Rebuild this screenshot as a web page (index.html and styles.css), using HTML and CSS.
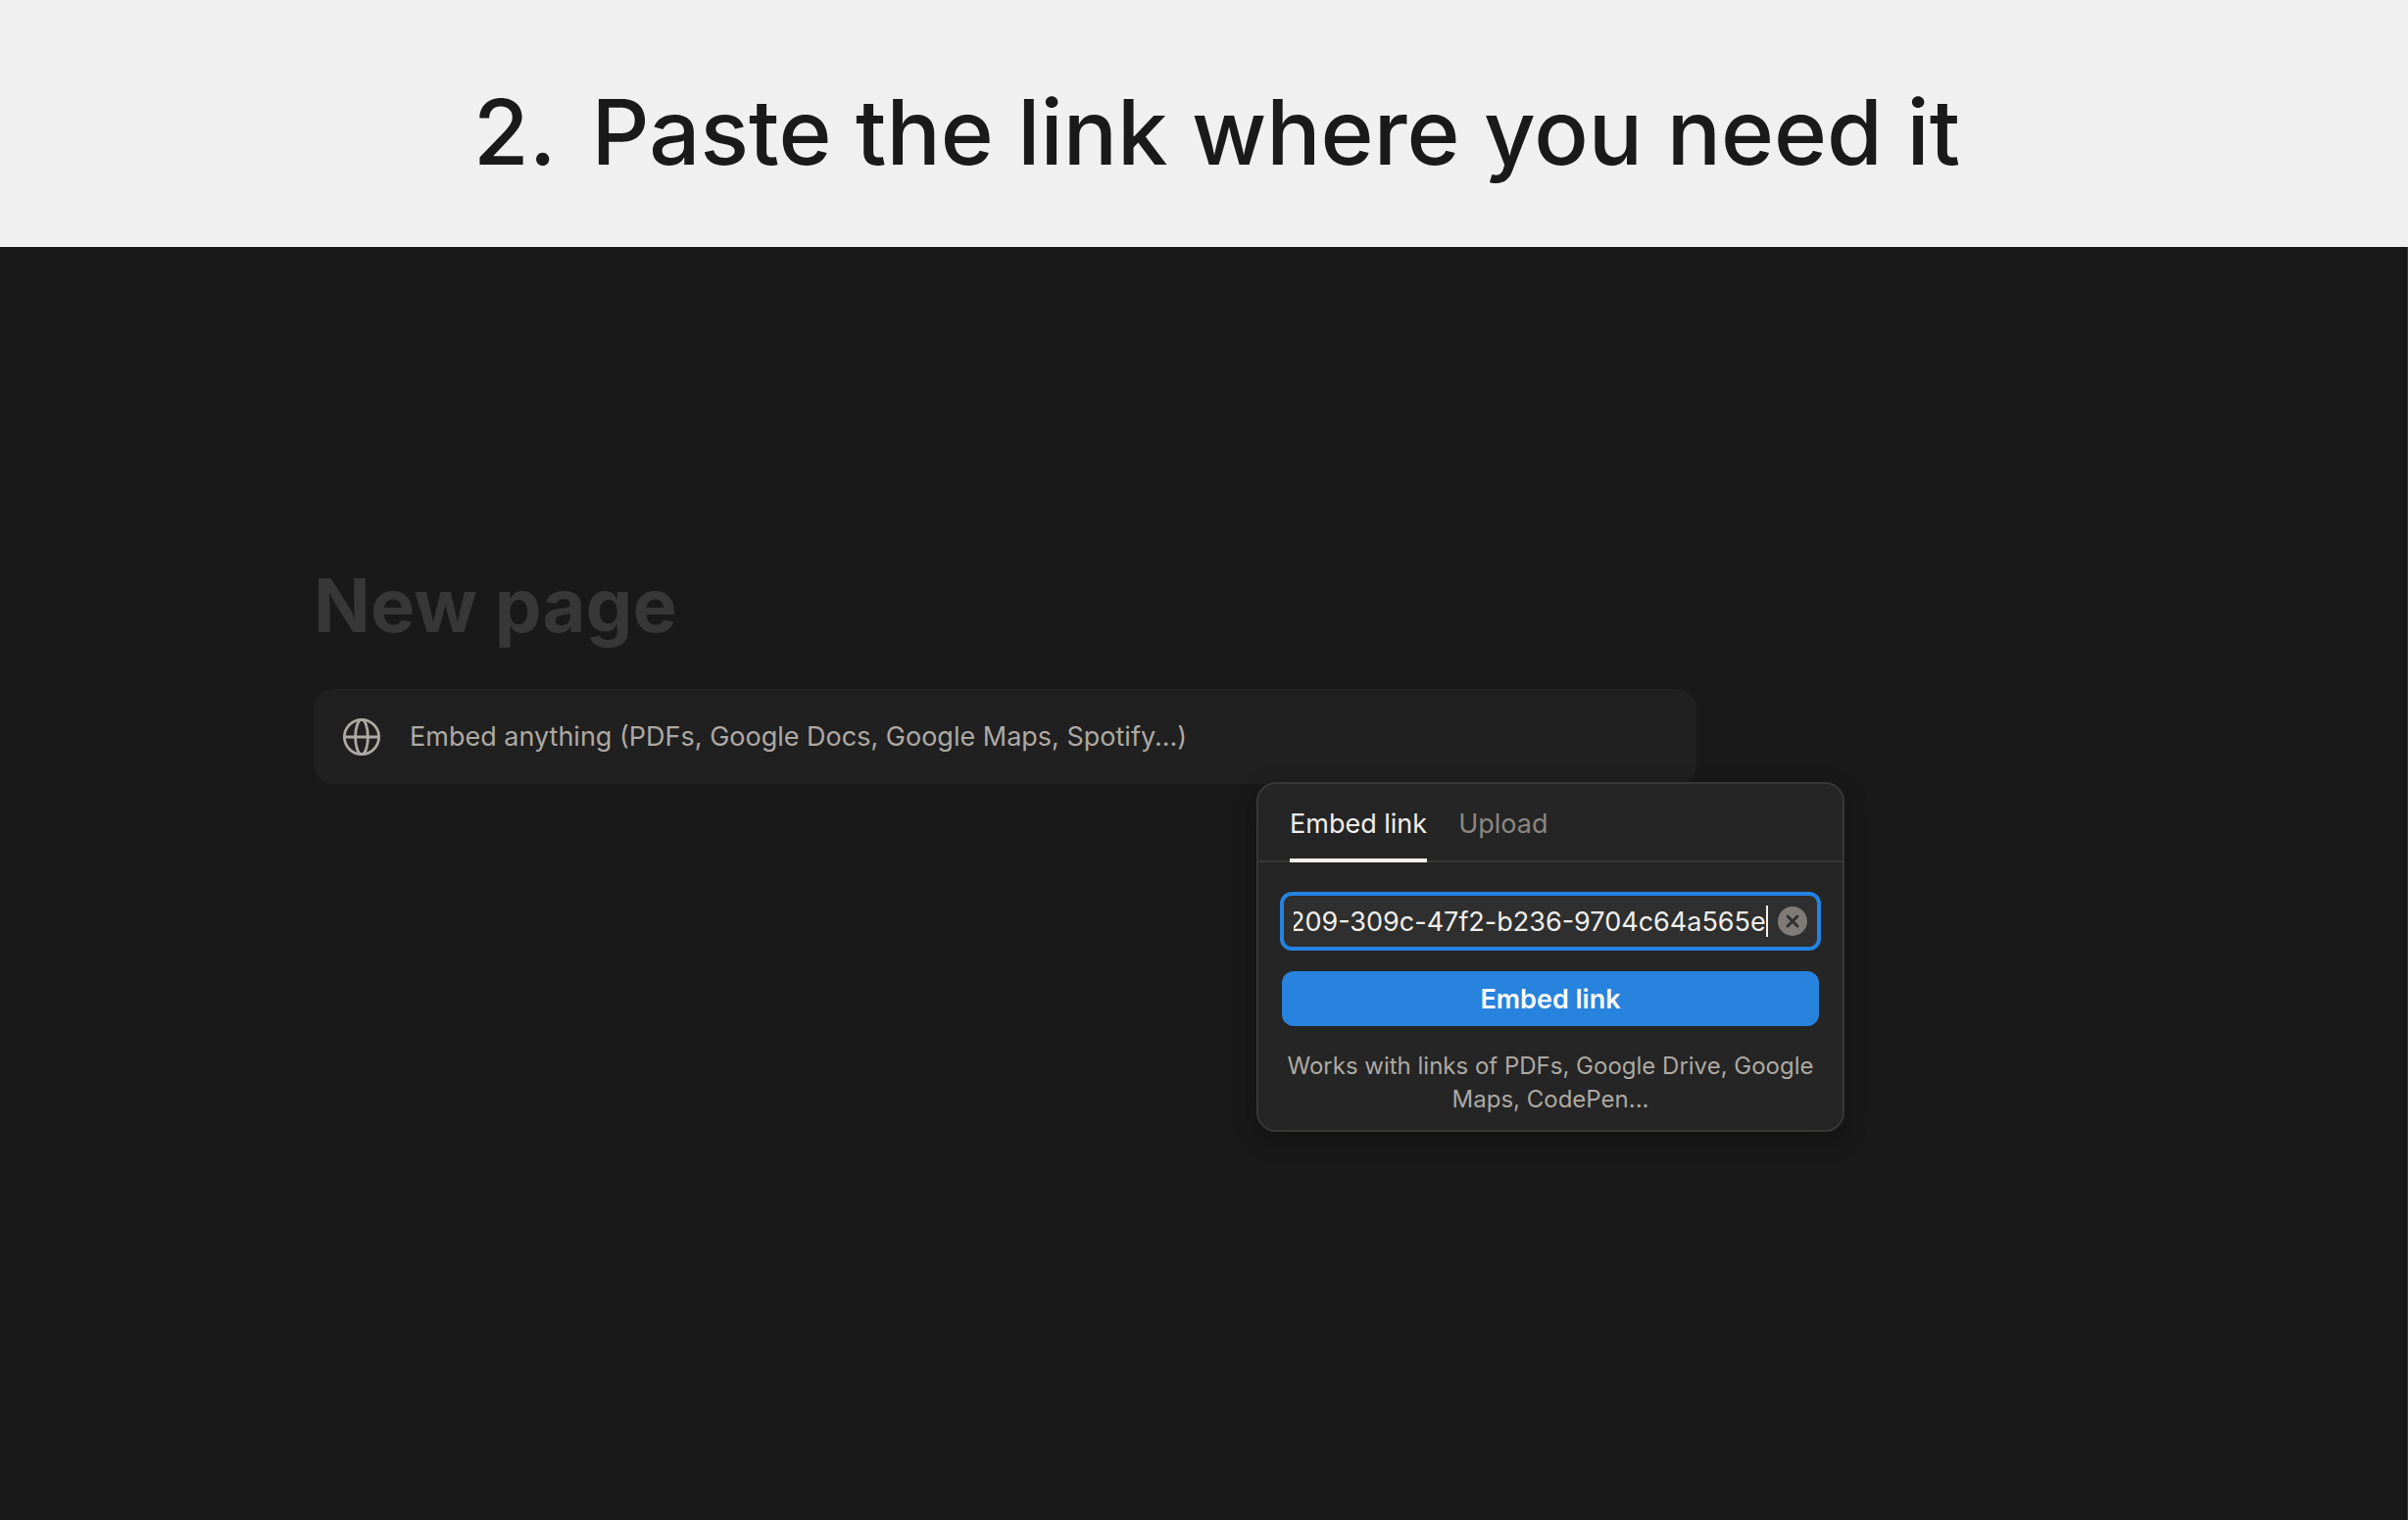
FILE: index.html
```html
<!DOCTYPE html>
<html lang="en">
<head>
<meta charset="utf-8">
<meta name="viewport" content="width=device-width, initial-scale=1">
<title>Paste the link where you need it</title>
<link rel="stylesheet" href="styles.css">
</head>
<body>
<header class="step">
  <h1 class="step-title"><span>2.</span><span>Paste the link where you need it</span></h1>
</header>
<main class="editor">
  <h2 class="page-title">New page</h2>
  <div class="embed">
    <button type="button" class="embed-block">
      <svg class="globe" viewBox="0 0 38 38" aria-hidden="true">
        <circle cx="19" cy="19" r="17.6"/>
        <ellipse cx="19" cy="19" rx="6.4" ry="17.6"/>
        <path d="M1.4 19h35.2"/>
      </svg>
      <span>Embed anything (PDFs, Google Docs, Google Maps, Spotify...)</span>
    </button>
    <section class="popover">
      <nav class="tabs">
        <button type="button" class="tab tab-active">Embed link</button>
        <button type="button" class="tab">Upload</button>
      </nav>
      <form class="embed-form">
        <div class="field">
          <input id="link" class="field-input" type="text" aria-label="Link" value="209-309c-47f2-b236-9704c64a565e" spellcheck="false">
          <span class="caret"></span>
          <button type="button" class="clear" aria-label="Clear">
            <svg viewBox="0 0 30 30" aria-hidden="true"><circle cx="15" cy="15" r="15"/><path d="M10 10l10 10M20 10l-10 10"/></svg>
          </button>
        </div>
        <button type="button" class="submit">Embed link</button>
        <p class="hint">Works with links of PDFs, Google Drive, Google Maps, CodePen...</p>
      </form>
    </section>
  </div>
</main>
<script src="script.js"></script>
</body>
</html>
```
FILE: script.js
```js
// Keep the end of a long link in view.
const link = document.getElementById('link');
link.scrollLeft = link.scrollWidth;
```
FILE: styles.css
```css
* {
  box-sizing: border-box;
}

body {
  margin: 0;
  min-height: 100vh;
  display: flex;
  flex-direction: column;
  background: #191919;
  color: #f0efed;
  font-family: Inter, "Liberation Sans", sans-serif;
  font-size: 27px;
}

button,
input {
  font: inherit;
  color: inherit;
  border: 0;
  background: none;
  padding: 0;
}

.step {
  padding: 75px 32px 57px;
  background: #f0f0f0;
  color: #1a1a1a;
}

.step-title {
  display: flex;
  justify-content: center;
  gap: 36px;
  margin: 0;
  padding-left: 26px;
  font-size: 92px;
  line-height: 120px;
  font-weight: 500;
}

.editor {
  flex: 1;
  padding: 315px 320px 96px;
  border-right: 1px solid #3a3a3a;
}

.page-title {
  margin: 0 0 36px;
  font-size: 76px;
  line-height: 100px;
  font-weight: 700;
  color: #373737;
}

.embed {
  position: relative;
  max-width: 1411px;
}

.embed-block {
  display: flex;
  align-items: center;
  gap: 30px;
  width: 100%;
  height: 97px;
  padding: 0 30px;
  border-radius: 20px;
  background: #202020;
  color: #ada9a3;
  text-align: left;
}

.globe {
  width: 38px;
  height: 38px;
  fill: none;
  stroke: currentColor;
  stroke-width: 2.8;
}

.popover {
  position: absolute;
  top: 95px;
  right: -151px;
  width: 600px;
  border: 2px solid #383836;
  border-radius: 20px;
  background: #252525;
  box-shadow: 0 8px 24px rgb(0 0 0 / 25%);
}

.tabs {
  display: flex;
  gap: 32px;
  padding: 0 32px;
  border-bottom: 2px solid #383836;
}

.tab {
  height: 80px;
  margin-bottom: -2px;
  padding-top: 4px;
  border-bottom: 4px solid transparent;
  color: #8a8782;
}

.tab-active {
  color: #f0efed;
  border-bottom-color: #f0efed;
}

.embed-form {
  display: flex;
  flex-direction: column;
  padding: 30px 22px 14px;
}

.field {
  position: relative;
  display: flex;
  align-items: center;
  height: 60px;
  padding: 0 10px;
  border: 4px solid #2383e2;
  border-radius: 12px;
  background: #2f2f2f;
}

.field-input {
  flex: 1;
  min-width: 0;
  height: 40px;
  outline: 0;
}

.caret {
  width: 2px;
  height: 32px;
  background: #f0efed;
}

.clear {
  width: 30px;
  height: 30px;
  margin-left: 10px;
}

.clear svg {
  display: block;
  fill: #7f7c78;
  stroke-width: 0;
}

.clear path {
  stroke: #2f2f2f;
  stroke-width: 3;
  stroke-linecap: round;
}

.submit {
  height: 56px;
  margin: 21px 2px 0;
  border-radius: 12px;
  background: #2783de;
  color: #fff;
  font-weight: 600;
}

.hint {
  margin: 24px 0 0;
  font-size: 24px;
  line-height: 34px;
  text-align: center;
  color: #ada9a3;
}
```
